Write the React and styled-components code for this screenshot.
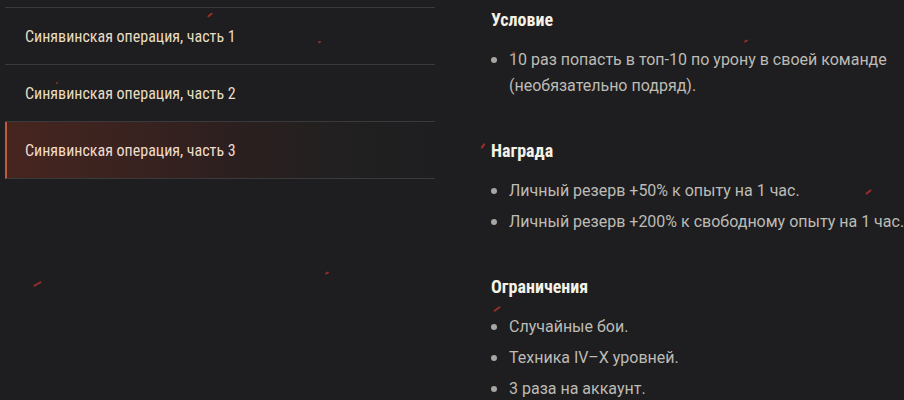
import React from 'react'
import styled, { createGlobalStyle } from 'styled-components'

const GlobalStyle = createGlobalStyle`
  html, body {
    margin: 0;
    padding: 0;
    background: #1e1e20;
  }
  body {
    font-family: 'Roboto', 'Liberation Sans', sans-serif;
    overflow: hidden;
  }
`

const parts = [
  { id: 1, title: 'Синявинская операция, часть 1' },
  { id: 2, title: 'Синявинская операция, часть 2' },
  { id: 3, title: 'Синявинская операция, часть 3' },
]

const sections = [
  {
    title: 'Условие',
    items: ['10 раз попасть в топ-10 по урону в своей команде (необязательно подряд).'],
  },
  {
    title: 'Награда',
    items: ['Личный резерв +50% к опыту на 1 час.', 'Личный резерв +200% к свободному опыту на 1 час.'],
  },
  {
    title: 'Ограничения',
    items: ['Случайные бои.', 'Техника IV–X уровней.', '3 раза на аккаунт.'],
  },
]

// little red sparks scattered over the page
const sparks = [
  { x: 207, y: 14, w: 6, r: -40 },
  { x: 318, y: 41, w: 3, r: -30 },
  { x: 56, y: 82, w: 2, r: 0 },
  { x: 744, y: 40, w: 4, r: -30 },
  { x: 480, y: 145, w: 6, r: -55 },
  { x: 865, y: 191, w: 7, r: -40 },
  { x: 33, y: 283, w: 9, r: -30 },
  { x: 325, y: 272, w: 4, r: -30 },
  { x: 493, y: 308, w: 8, r: -35 },
  { x: 512, y: 52, w: 3, r: -70 },
]

const App = () => {
  return (
    <>
      <GlobalStyle />
      <Page>
        <PartList>
          {parts.map(p => (
            <PartRow key={p.id} $active={p.id === 3}>
              <PartTitle $active={p.id === 3}>{p.title}</PartTitle>
            </PartRow>
          ))}
        </PartList>

        <Details>
          {sections.map(s => (
            <Section key={s.title}>
              <Heading>{s.title}</Heading>
              <Bullets>
                {s.items.map(it => (
                  <Bullet key={it}>{it}</Bullet>
                ))}
              </Bullets>
            </Section>
          ))}
        </Details>

        {sparks.map((s, i) => (
          <Spark key={i} style={{ left: s.x, top: s.y, width: s.w, transform: `rotate(${s.r}deg)` }} />
        ))}
      </Page>
    </>
  )
}

const Page = styled.div`
  position: relative;
  width: 904px;
  height: 400px;
  display: grid;
  grid-template-columns: 430px 1fr;
  column-gap: 56px;
  padding: 7px 0 0 5px;
  box-sizing: border-box;
`

const PartList = styled.div`
  display: flex;
  flex-direction: column;
  align-self: start;
  border-top: 1px solid #3a3a3c;
`

const PartRow = styled.div`
  height: 57px;
  box-sizing: border-box;
  display: flex;
  align-items: center;
  padding-left: ${p => (p.$active ? '18px' : '20px')};
  border-bottom: 1px solid #3a3a3c;
  border-left: ${p => (p.$active ? '2px solid #bf5a42' : 'none')};
  background: ${p =>
    p.$active
      ? 'linear-gradient(90deg, #47251f 0%, #3b231f 25%, #2b1f1f 55%, #222020 75%, rgba(30, 30, 32, 0) 100%)'
      : 'transparent'};
`

const PartTitle = styled.span`
  font-family: 'Roboto Condensed', 'Liberation Sans Narrow', sans-serif;
  font-size: 16px;
  color: ${p => (p.$active ? '#f0dccd' : '#e8dcc2')};
`

const Details = styled.div`
  display: flex;
  flex-direction: column;
  gap: 40px;
  padding-top: 1px;
  min-width: 0;
`

const Section = styled.section`
  display: flex;
  flex-direction: column;
  gap: 15px;
`

const Heading = styled.h3`
  margin: 0;
  font-family: 'Roboto Condensed', 'Liberation Sans Narrow', sans-serif;
  font-weight: 700;
  font-size: 18px;
  line-height: 24px;
  color: #f4f1e6;
`

const Bullets = styled.ul`
  list-style: none;
  margin: 0;
  padding: 0;
  display: flex;
  flex-direction: column;
  gap: 5px;
`

const Bullet = styled.li`
  display: flex;
  gap: 12px;
  font-size: 16px;
  line-height: 26px;
  color: #bdbbb5;
  width: 420px;

  &::before {
    content: '';
    flex: none;
    width: 6px;
    height: 6px;
    margin-top: 10px;
    border-radius: 50%;
    background: #a7a6a2;
  }
`

const Spark = styled.i`
  position: absolute;
  height: 2px;
  border-radius: 1px;
  background: #b8332a;
  opacity: 0.8;
`

export default App
